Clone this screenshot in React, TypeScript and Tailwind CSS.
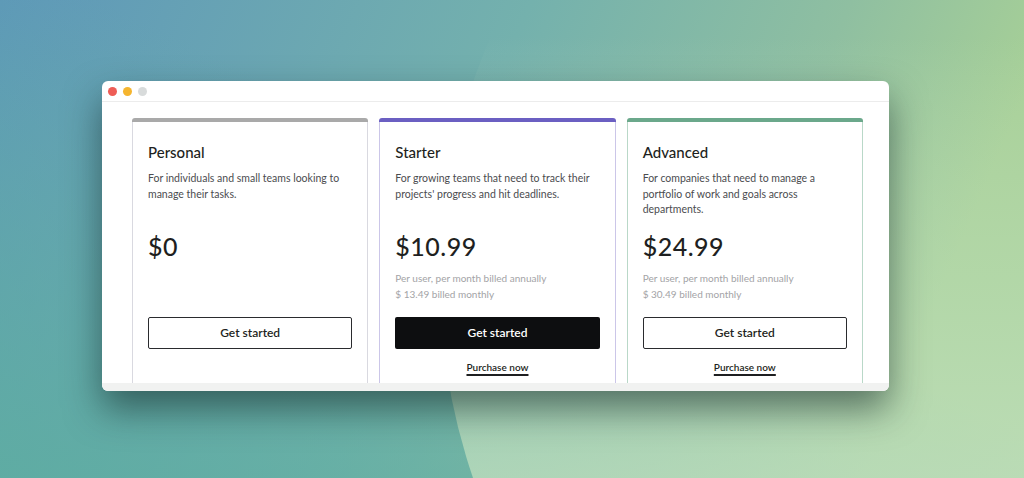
import React from 'react'

type Plan = {
  name: string
  desc: string
  price: string
  note?: [string, string]
  bar: string
  side: string
  primary?: boolean
  purchase?: boolean
}

const plans: Plan[] = [
  {
    name: 'Personal',
    desc: 'For individuals and small teams looking to manage their tasks.',
    price: '$0',
    bar: 'bg-[#a9a9a9]',
    side: 'border-[#d9d9e0]',
  },
  {
    name: 'Starter',
    desc: "For growing teams that need to track their projects' progress and hit deadlines.",
    price: '$10.99',
    note: ['Per user, per month billed annually', '$ 13.49 billed monthly'],
    bar: 'bg-[#6b5fc2]',
    side: 'border-[#cbc6e8]',
    primary: true,
    purchase: true,
  },
  {
    name: 'Advanced',
    desc: 'For companies that need to manage a portfolio of work and goals across departments.',
    price: '$24.99',
    note: ['Per user, per month billed annually', '$ 30.49 billed monthly'],
    bar: 'bg-[#6ba88b]',
    side: 'border-[#b9d8c8]',
    purchase: true,
  },
]

function Backdrop() {
  return (
    <svg className="absolute inset-0 w-full h-full" viewBox="0 0 1024 478" preserveAspectRatio="none">
      <defs>
        <linearGradient id="base" x1="0" y1="0" x2="1" y2="0.2">
          <stop offset="0" stopColor="#5e98b9" />
          <stop offset="0.5" stopColor="#74b1ad" />
          <stop offset="0.8" stopColor="#8fbfa1" />
          <stop offset="1" stopColor="#a6cf97" />
        </linearGradient>
        <linearGradient id="low" x1="1" y1="0" x2="0" y2="1">
          <stop offset="0.45" stopColor="#5fb0a0" stopOpacity="0" />
          <stop offset="1" stopColor="#5daea0" stopOpacity="0.85" />
        </linearGradient>
        <linearGradient id="blob" x1="0" y1="0" x2="0" y2="1">
          <stop offset="0.3" stopColor="#cfe8c6" stopOpacity="0" />
          <stop offset="0.5" stopColor="#c4e3c0" stopOpacity="0.4" />
          <stop offset="0.66" stopColor="#c2e0bf" stopOpacity="0.75" />
        </linearGradient>
      </defs>
      <rect width="1024" height="478" fill="url(#base)" />
      <rect width="1024" height="478" fill="url(#low)" />
      <circle cx="1050" cy="280" r="610" fill="url(#blob)" />
    </svg>
  )
}

function Card({ plan }: { plan: Plan }) {
  return (
    <div className="flex flex-col">
      <div className={`h-[4px] rounded-t-[3px] ${plan.bar}`} />
      <div className={`flex-1 bg-white border-x ${plan.side} px-[15px] pt-[20px]`}>
        <h2 className="text-[15px] leading-[20px] font-medium text-[#1e1f21]">{plan.name}</h2>
        <p className="mt-[9px] h-[60px] text-[10.5px] leading-[15.5px] text-[#4b4c4f]">{plan.desc}</p>
        <div className="text-[25px] leading-[30px] font-medium text-[#1e1f21] tracking-[0.5px]">{plan.price}</div>
        <div className="h-[56px] pt-[9px] text-[10px] leading-[16px] text-[#a3a3a6]">
          {plan.note && (
            <>
              <div>{plan.note[0]}</div>
              <div>{plan.note[1]}</div>
            </>
          )}
        </div>
        <button
          className={`w-full h-[32px] rounded-[2px] text-[12px] font-semibold ${
            plan.primary
              ? 'bg-[#0d0e10] text-white'
              : 'border-[1.5px] border-[#2a2b2e] text-[#1e1f21] bg-white'
          }`}
        >
          Get started
        </button>
        {plan.purchase && (
          <div className="mt-[11px] text-center text-[10px] leading-[14px]">
            <span className="font-semibold text-[#1e1f21] underline decoration-[1.5px] underline-offset-[3px]">
              Purchase now
            </span>
          </div>
        )}
      </div>
    </div>
  )
}

export default function App() {
  return (
    <div className="relative w-full h-[478px] overflow-hidden" style={{ fontFamily: 'Lato, "Open Sans", sans-serif' }}>
      <Backdrop />
      <div className="relative pt-[81px] pl-[102px]">
        <div className="w-[787px] rounded-[6px] bg-white overflow-hidden shadow-[0_18px_36px_rgba(15,35,35,0.55)]">
          {/* title bar */}
          <div className="h-[21px] flex items-start gap-[6px] pl-[6px] pt-[6px] border-b border-[#ececec]">
            <span className="w-[9px] h-[9px] rounded-full bg-[#ee5d56]" />
            <span className="w-[9px] h-[9px] rounded-full bg-[#f5b52f]" />
            <span className="w-[9px] h-[9px] rounded-full bg-[#d8dbdb]" />
          </div>
          <div className="h-[281px] overflow-hidden pt-[16px] pl-[30px] pr-[26px] grid grid-cols-3 gap-[11px]">
            {plans.map(p => (
              <Card key={p.name} plan={p} />
            ))}
          </div>
          <div className="h-[8px] bg-[#f1f2f1]" />
        </div>
      </div>
    </div>
  )
}
